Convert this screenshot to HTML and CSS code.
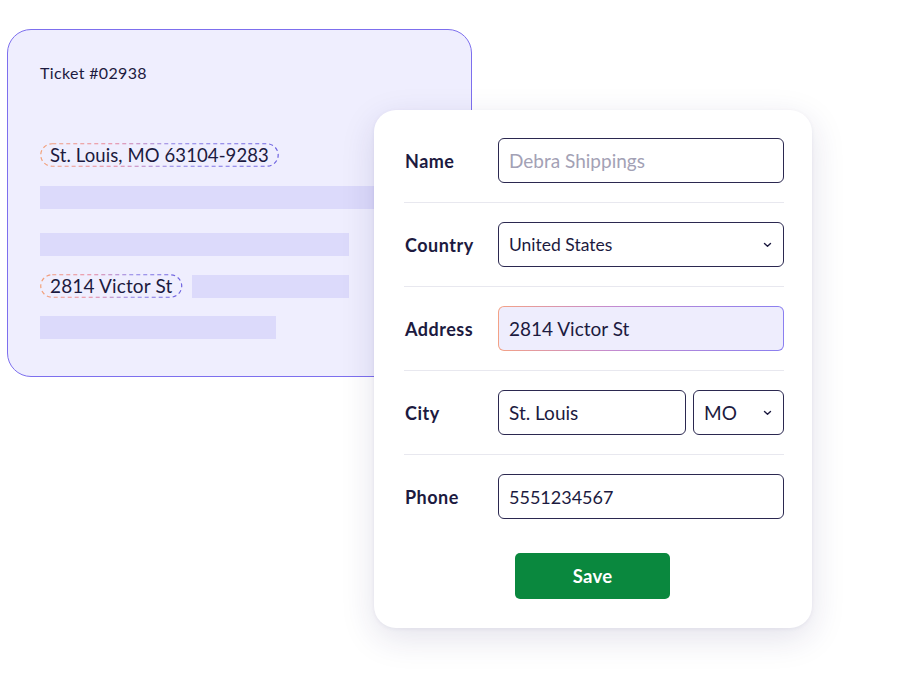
FILE: index.html
```html
<!DOCTYPE html>
<html>
<head>
<meta charset="utf-8">
<link rel="stylesheet" href="styles.css">
</head>
<body>
<div class="stage">
  <div class="ticket">
    <div class="ticket-title">Ticket #02938</div>
    <div class="line line-pill">
      <span class="pill">St. Louis, MO 63104-9283
        <svg class="dash" preserveAspectRatio="none"><defs><linearGradient id="g1" x1="0" x2="1" y1="0" y2="0"><stop offset="0" stop-color="#f2a27a"/><stop offset="0.3" stop-color="#e9849a"/><stop offset="0.55" stop-color="#8b7fe6"/><stop offset="1" stop-color="#6e63e0"/></linearGradient></defs><rect x="0.75" y="0.75" width="calc(100% - 1.5px)" height="calc(100% - 1.5px)" rx="11.5" fill="none" stroke="url(#g1)" stroke-width="1.2" stroke-dasharray="4 3"/></svg>
      </span>
    </div>
    <div class="bar bar-long"></div>
    <div class="bar bar-mid"></div>
    <div class="line line-pill2">
      <span class="pill">2814 Victor St
        <svg class="dash" preserveAspectRatio="none"><defs><linearGradient id="g2" x1="0" x2="1" y1="0" y2="0"><stop offset="0" stop-color="#f2a27a"/><stop offset="0.35" stop-color="#e9849a"/><stop offset="0.65" stop-color="#8b7fe6"/><stop offset="1" stop-color="#6e63e0"/></linearGradient></defs><rect x="0.75" y="0.75" width="calc(100% - 1.5px)" height="calc(100% - 1.5px)" rx="11.5" fill="none" stroke="url(#g2)" stroke-width="1.2" stroke-dasharray="4 3"/></svg>
      </span>
      <div class="bar bar-side"></div>
    </div>
    <div class="bar bar-short"></div>
  </div>

  <div class="form">
    <div class="row">
      <div class="label">Name</div>
      <div class="field placeholder">Debra Shippings</div>
    </div>
    <div class="row">
      <div class="label">Country</div>
      <div class="field select">United States
        <svg class="chev" width="9" height="6" viewBox="0 0 9 6"><path d="M1.5 1.5 L4.5 4.3 L7.5 1.5" fill="none" stroke="#1c1a40" stroke-width="1.4" stroke-linecap="round" stroke-linejoin="round"/></svg>
      </div>
    </div>
    <div class="row">
      <div class="label">Address</div>
      <div class="field active">2814 Victor St</div>
    </div>
    <div class="row">
      <div class="label">City</div>
      <div class="pair">
        <div class="field city">St. Louis</div>
        <div class="field select state">MO
          <svg class="chev" width="9" height="6" viewBox="0 0 9 6"><path d="M1.5 1.5 L4.5 4.3 L7.5 1.5" fill="none" stroke="#1c1a40" stroke-width="1.4" stroke-linecap="round" stroke-linejoin="round"/></svg>
        </div>
      </div>
    </div>
    <div class="row last">
      <div class="label">Phone</div>
      <div class="field digits">5551234567</div>
    </div>
    <div class="actions">
      <button class="save">Save</button>
    </div>
  </div>
</div>
</body>
</html>
```

FILE: styles.css
```css
* { box-sizing: border-box; }
html, body {
  margin: 0;
  padding: 0;
  background: #ffffff;
}
body {
  font-family: "Lato", "Inter", "Noto Sans", sans-serif;
  color: #1c1a40;
}
.stage {
  position: relative;
  width: 900px;
  height: 675px;
  padding: 29px 0 0 7px;
}
.ticket {
  width: 465px;
  height: 348px;
  border: 1.8px solid #7d6fee;
  border-radius: 24px;
  background: #efeefe;
  padding: 34px 0 0 32px;
  display: flex;
  flex-direction: column;
}
.ticket-title {
  font-size: 16px;
  letter-spacing: 0.35px;
  line-height: 18px;
  color: #1c1a40;
  margin-bottom: 61px;
}
.pill {
  position: relative;
  display: inline-block;
  height: 24px;
  line-height: 24px;
  padding: 0 10px;
  font-size: 18.5px;
  letter-spacing: 0.1px;
  color: #1c1a40;
  white-space: nowrap;
}
.line-pill2 .pill { font-size: 19px; letter-spacing: 0.15px; }
.dash {
  position: absolute;
  left: 0; top: 0;
  width: 100%;
  height: 100%;
  overflow: visible;
}
.line { display: flex; align-items: center; }
.line-pill { margin-bottom: 19px; }
.bar {
  background: #dcdafb;
  height: 23px;
}
.bar-long { width: 420px; margin-bottom: 24px; }
.bar-mid { width: 309px; margin-bottom: 18px; }
.line-pill2 { gap: 10px; margin-bottom: 18px; }
.bar-side { width: 157px; }
.bar-short { width: 236px; }

.form {
  position: absolute;
  left: 374px;
  top: 110px;
  width: 438px;
  height: 518px;
  background: #ffffff;
  border-radius: 22px;
  box-shadow: 0 10px 34px rgba(40, 30, 100, 0.13), 0 1px 4px rgba(40, 30, 100, 0.06);
  padding: 9px 28px 0 30px;
}
.row {
  display: flex;
  align-items: center;
  padding: 19px 0 19px;
  border-bottom: 1px solid #e8e8ef;
}
.row.last { border-bottom: none; }
.label {
  width: 94px;
  flex: none;
  font-weight: 700;
  font-size: 18px;
  letter-spacing: 0.5px;
  color: #1c1a40;
  padding-left: 1px;
}
.field {
  flex: 1;
  height: 45px;
  border: 1.5px solid #2b2850;
  border-radius: 6px;
  display: flex;
  align-items: center;
  padding: 0 10px;
  font-size: 19px;
  color: #1c1a40;
  position: relative;
}
.digits { font-size: 18px; }
.placeholder { color: #a3a1b5; }
.select { font-size: 17.5px; justify-content: space-between; padding-right: 11px; }
.state { font-size: 19px; }
.active {
  border: 1.5px solid transparent;
  background:
    linear-gradient(#eeedfd, #eeedfd) padding-box,
    linear-gradient(90deg, #f4a286 0%, #c48bd0 40%, #8a7ff0 100%) border-box;
}
.pair { flex: 1; display: flex; gap: 7px; }
.city { flex: none; width: 188px; }
.state { flex: 1; }
.chev { flex: none; }
.actions {
  display: flex;
  justify-content: center;
  padding-top: 15px;
  padding-right: 3px;
}
.save {
  width: 155px;
  height: 46px;
  border: none;
  border-radius: 5px;
  background: #0a883e;
  color: #ffffff;
  font-family: "Lato", "Inter", sans-serif;
  font-weight: 700;
  font-size: 18.5px;
  letter-spacing: 0.3px;
}
```
